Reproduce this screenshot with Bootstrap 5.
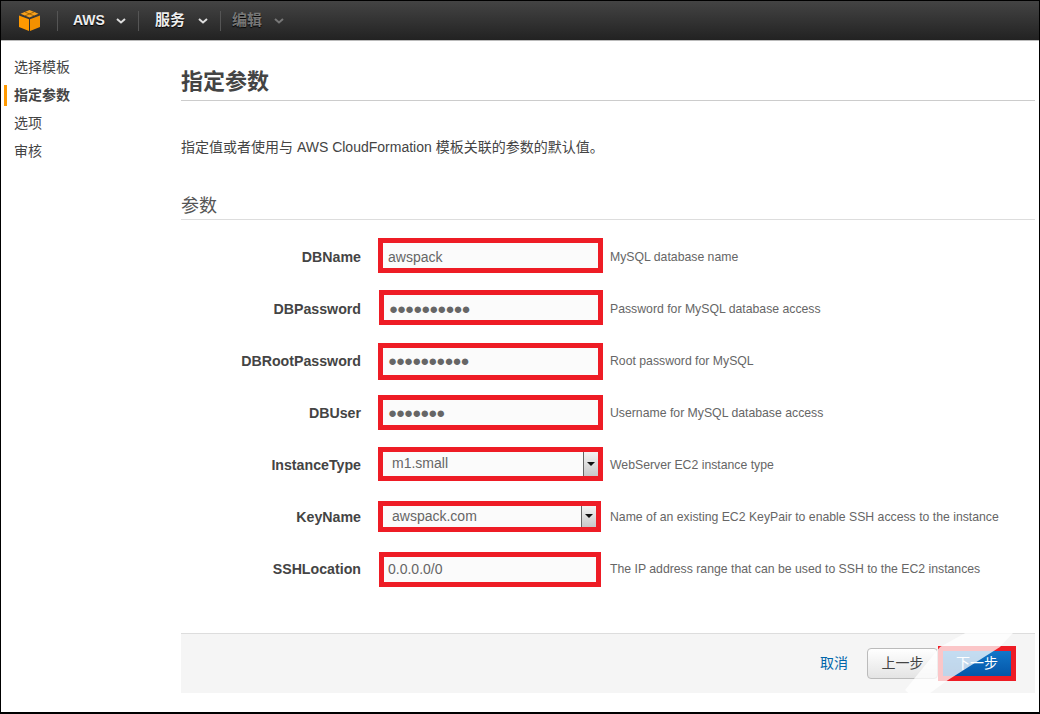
<!doctype html>
<html lang="zh"><head><meta charset="utf-8"><title>指定参数</title>
<link href="https://cdn.jsdelivr.net/npm/bootstrap@5.3.0/dist/css/bootstrap.min.css" rel="stylesheet">
<style>
html,body{height:714px;overflow:hidden}
body{font-family:"Liberation Sans","Noto Sans CJK SC",sans-serif;font-size:14px;color:#444;background:#fff}
.shell{width:1040px;height:714px;border:solid #000;border-width:1px 1px 2px 1px;display:flex;flex-direction:column;position:relative;overflow:hidden}
.topbar{height:40px;background:linear-gradient(#444,#222);border-bottom:1px solid #bbb;flex:none}
.logo{width:56px}
.tb-item{height:20px;border-left:1px solid #555;font-weight:700;font-size:14px;color:#eee;text-shadow:0 1px 1px #000}
.tb-item.i1{width:81px;padding-left:15px}.tb-item.i2{width:82px;padding-left:16px;font-size:15px}.tb-item.i3{padding-left:11px;color:#777;font-size:15px}
.tb-item svg{margin-left:11px}
.i2 svg{margin-left:13px}
.i3 svg{margin-left:12px}
.mainrow{flex:1;min-height:0}
.side{width:180px;flex:none;padding-top:12px}
.side-link{height:28px;line-height:28px;padding-left:7px;border-left:3px solid transparent;margin-left:3px;color:#444;font-size:14px}
.side-link.on{font-weight:700;border-left-color:#f90;height:21px;line-height:21px;margin-top:4px;margin-bottom:3px}
.content{width:854px;flex:none}
.h-title{font-size:22px;font-weight:700;color:#444;margin:0;padding-top:26px;height:60px;border-bottom:1px solid #ccc;line-height:30px}
.intro{font-size:14px;margin:36px 0 0;height:20px;line-height:20px}
.h-sec{font-size:18px;font-weight:400;color:#555;margin:37px 0 0;height:26px;line-height:24px;border-bottom:1px solid #ddd}
.rows{padding-top:11px}
.prow{height:52px}
.plabel{width:180px;text-align:right;font-weight:700;font-size:14.2px;color:#444;flex:none;padding-top:2px}
.frame{border:5px solid #ee1c25;background:#fbfbfb;flex:none;margin-left:17px;width:225px;height:35px;font-size:14px;color:#666;padding-left:5px}
.frame.up{margin-bottom:3px;padding-top:3px}
.frame.up-s{margin-bottom:1px;padding-top:1px}
.frame.r2{margin-left:18px;width:224px}
.frame.r3{height:37px}
.frame.r5{height:34px;margin-bottom:3px}
.frame.r6{width:223px;height:31px;margin-bottom:2px}
.frame.r7{margin-left:18px;width:222px;padding-left:4px}
.frame.sel{padding:0 0 0 9px}
.arrowbox{width:15px;height:100%;border-left:1px solid #666;background:linear-gradient(#f4f4f4,#c8c8c8)}
.dots{letter-spacing:-1px;font-size:15px}
.phelp{font-size:12.25px;color:#666;margin-left:7px;white-space:nowrap}
.phelp.wide{margin-left:9px}
.foot{height:60px;background:#f5f5f5;border-top:1px solid #ddd;margin-top:38px;padding-right:19px}
.cancel{color:#06a;font-size:14px;text-decoration:none;margin-right:19px}
.b-prev{width:71px;height:31px;border:1px solid #bbb;border-radius:4px;background:linear-gradient(#fff,#e4e4e4);font-size:14px;color:#444;padding:0}
.b-next{width:78px;height:35px;border:5px solid #ee1c25;background:linear-gradient(#1276c8,#0456a8);font-size:14px;color:#fff;padding:0;border-radius:0;margin-left:0}
.wm{position:absolute;left:899px;top:609px;pointer-events:none}
</style></head><body>
<div class="shell">
<header class="topbar d-flex align-items-center">
 <div class="logo d-flex justify-content-center">
  <svg width="21" height="21" viewBox="0 0 21 21"><path fill="#f90" d="M0 5.500 10 9.300V21L0 17z"/><path fill="#f39000" d="M21 5.500 11 9.300V21l10-4z"/><path fill="#f7a01c" d="M10.500 0 19.500 3.800 10.500 7.500 1.500 3.800z"/><path fill="none" stroke="#7a4d00" stroke-width=".7" d="M6 2 15 5.800M15 2 6 5.800"/></svg>
 </div>
 <div class="tb-item i1 d-flex align-items-center">AWS<svg width="10" height="6" viewBox="0 0 10 6"><path d="M1 1l4 3.500L9 1" fill="none" stroke="#ddd" stroke-width="2"/></svg></div>
 <div class="tb-item i2 d-flex align-items-center">服务<svg width="10" height="6" viewBox="0 0 10 6"><path d="M1 1l4 3.500L9 1" fill="none" stroke="#ddd" stroke-width="2"/></svg></div>
 <div class="tb-item i3 d-flex align-items-center">编辑<svg width="10" height="6" viewBox="0 0 10 6"><path d="M1 1l4 3.500L9 1" fill="none" stroke="#777" stroke-width="2"/></svg></div>
</header>
<div class="mainrow d-flex">
 <nav class="side">
  <div class="side-link">选择模板</div>
  <div class="side-link on">指定参数</div>
  <div class="side-link">选项</div>
  <div class="side-link">审核</div>
 </nav>
 <main class="content">
  <h1 class="h-title">指定参数</h1>
  <p class="intro">指定值或者使用与 AWS CloudFormation 模板关联的参数的默认值。</p>
  <h2 class="h-sec">参数</h2>
  <div class="rows">
   <div class="prow d-flex align-items-center"><div class="plabel">DBName</div><div class="frame up d-flex align-items-center">awspack</div><div class="phelp">MySQL database name</div></div>
   <div class="prow d-flex align-items-center"><div class="plabel">DBPassword</div><div class="frame up r2 d-flex align-items-center dots">●●●●●●●●●●</div><div class="phelp">Password for MySQL database access</div></div>
   <div class="prow d-flex align-items-center"><div class="plabel">DBRootPassword</div><div class="frame r3 d-flex align-items-center dots">●●●●●●●●●●</div><div class="phelp">Root password for MySQL</div></div>
   <div class="prow d-flex align-items-center"><div class="plabel">DBUser</div><div class="frame up-s d-flex align-items-center dots">●●●●●●●</div><div class="phelp">Username for MySQL database access</div></div>
   <div class="prow d-flex align-items-center"><div class="plabel">InstanceType</div><div class="frame sel r5 d-flex align-items-center"><span class="flex-grow-1">m1.small</span><span class="arrowbox d-flex align-items-center justify-content-center"><svg width="8" height="4" viewBox="0 0 8 4"><path d="M0 0h8L4 4z" fill="#111"/></svg></span></div><div class="phelp">WebServer EC2 instance type</div></div>
   <div class="prow d-flex align-items-center"><div class="plabel">KeyName</div><div class="frame sel r6 d-flex align-items-center"><span class="flex-grow-1">awspack.com</span><span class="arrowbox d-flex align-items-center justify-content-center"><svg width="8" height="4" viewBox="0 0 8 4"><path d="M0 0h8L4 4z" fill="#111"/></svg></span></div><div class="phelp wide">Name of an existing EC2 KeyPair to enable SSH access to the instance</div></div>
   <div class="prow d-flex align-items-center"><div class="plabel">SSHLocation</div><div class="frame r7 d-flex align-items-center">0.0.0.0/0</div><div class="phelp wide">The IP address range that can be used to SSH to the EC2 instances</div></div>
  </div>
  <div class="foot d-flex align-items-center justify-content-end">
   <a class="cancel" href="#">取消</a>
   <button class="btn b-prev" type="button">上一步</button>
   <button class="btn b-next" type="button">下一步</button>
  </div>
 </main>
</div>
<svg class="wm" width="140" height="100" viewBox="0 0 140 100"><path d="M125 10 100 37 48 70 18 92 5 80 40 37 85 12z" fill="#fff" fill-opacity=".75"/></svg>
</div>
</body></html>
